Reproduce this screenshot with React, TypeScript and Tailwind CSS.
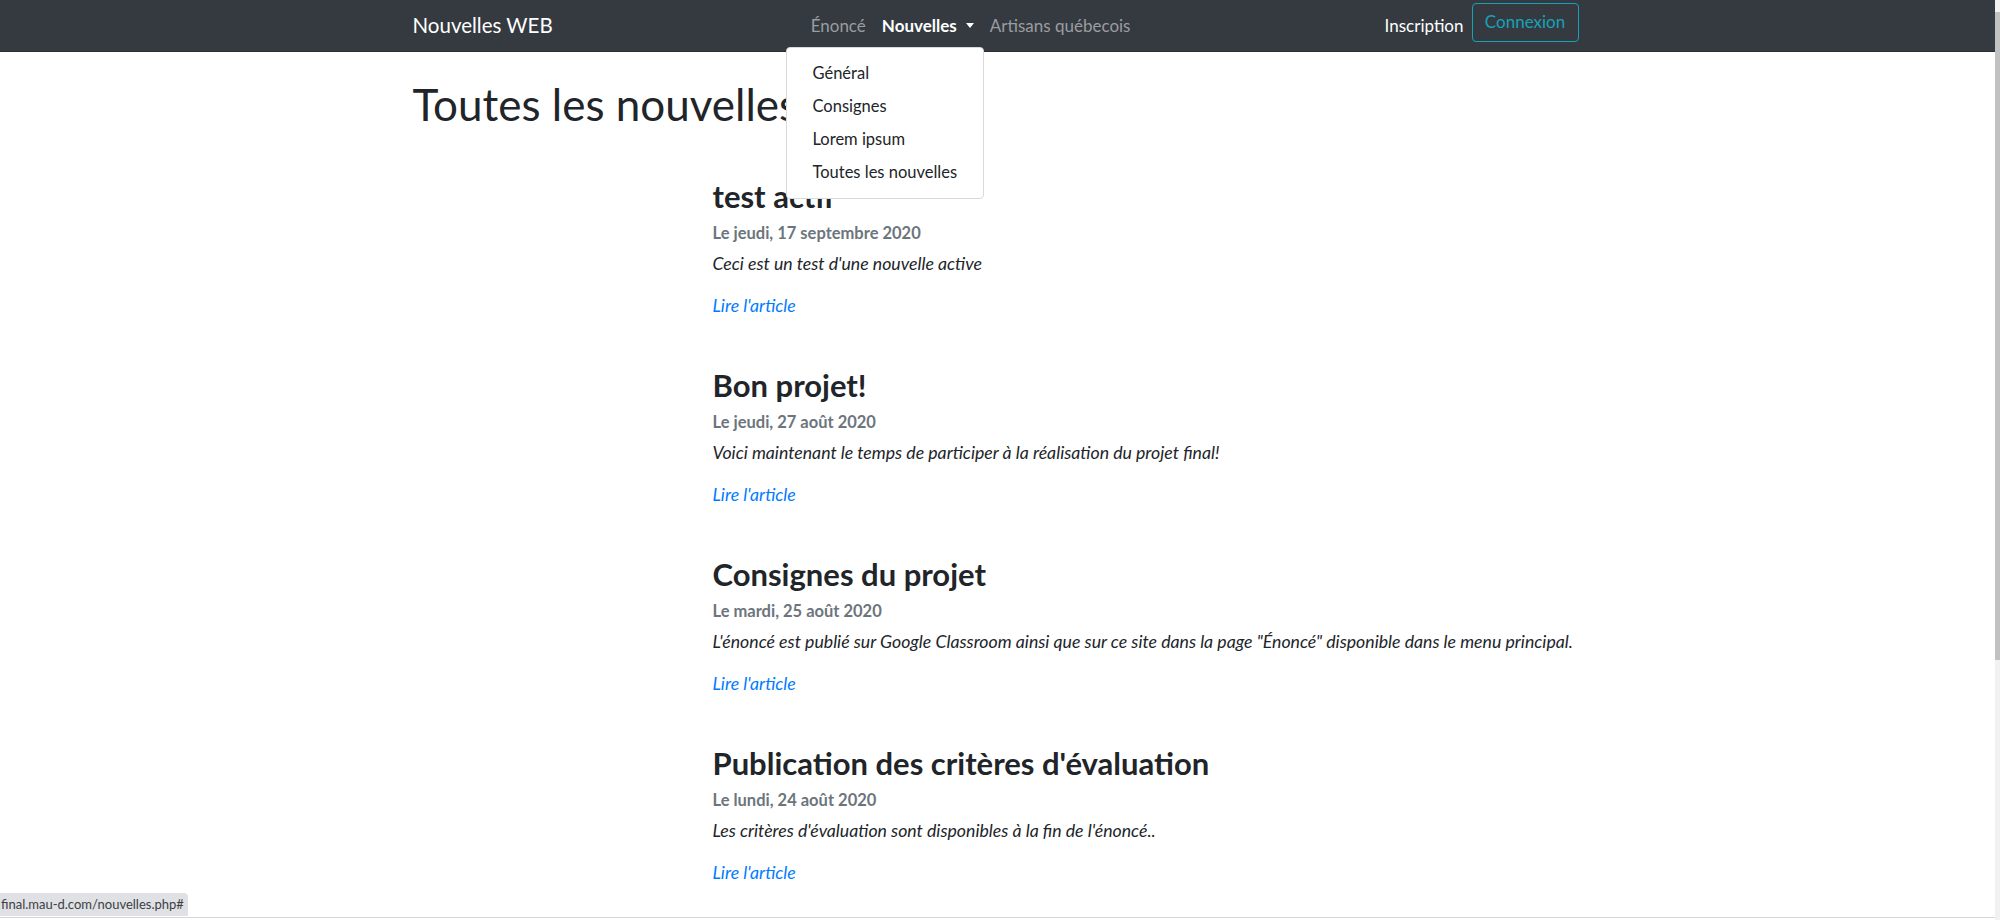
import React from "react";

const articles = [
  {
    id: 1,
    title: "test actif",
    date: "Le jeudi, 17 septembre 2020",
    description: "Ceci est un test d'une nouvelle active",
  },
  {
    id: 2,
    title: "Bon projet!",
    date: "Le jeudi, 27 août 2020",
    description:
      "Voici maintenant le temps de participer à la réalisation du projet final!",
  },
  {
    id: 3,
    title: "Consignes du projet",
    date: "Le mardi, 25 août 2020",
    description:
      'L\'énoncé est publié sur Google Classroom ainsi que sur ce site dans la page "Énoncé" disponible dans le menu principal.',
  },
  {
    id: 4,
    title: "Publication des critères d'évaluation",
    date: "Le lundi, 24 août 2020",
    description: "Les critères d'évaluation sont disponibles à la fin de l'énoncé..",
  },
];

const menuItems = ["Général", "Consignes", "Lorem ipsum", "Toutes les nouvelles"];

function Navbar() {
  return (
    <nav className="flex-none h-[52px] bg-[#343a40] border-b border-[#2b2f33]">
      <div className="relative mx-auto w-[1170px] h-full flex items-center">
        <a className="text-[20.5px] text-white leading-none">Nouvelles WEB</a>
        <ul className="flex items-center ml-[250px] text-[17px]">
          <li className="px-[8px] text-[#9a9da1]">Énoncé</li>
          <li className="px-[8px] text-white font-bold flex items-center">
            Nouvelles
            <span className="ml-[9px] w-0 h-0 border-x-[4px] border-x-transparent border-t-[5px] border-t-white" />
          </li>
          <li className="px-[8px] text-[#9a9da1]">Artisans québecois</li>
        </ul>
        <div className="ml-auto mr-[4px] flex items-center text-[17px]">
          <span className="text-white mr-[8px]">Inscription</span>
          <button className="h-[39px] w-[107px] mb-[7px] border border-[#17a2b8] rounded-[4px] text-[#17a2b8]">
            Connexion
          </button>
        </div>
        {/* dropdown ouvert */}
        <div className="absolute left-[373px] top-[47px] w-[198px] bg-white border border-[#d9dadb] rounded-[4px] py-[9px] z-10">
          {menuItems.map((item) => (
            <div
              key={item}
              className="h-[33px] pl-[26px] flex items-center whitespace-nowrap text-[16.5px] text-[#212529]"
            >
              {item}
            </div>
          ))}
        </div>
      </div>
    </nav>
  );
}

export default function App() {
  return (
    <div
      className="flex h-[920px] overflow-hidden bg-white"
      style={{ fontFamily: "Lato, 'Open Sans', sans-serif" }}
    >
      <div className="flex-1 flex flex-col relative min-h-0">
        <Navbar />
        <main className="mx-auto w-[1170px] flex-1 min-h-0">
          <h1 className="mt-[26px] text-[44px] leading-[1.2] text-[#212529]">
            Toutes les nouvelles
          </h1>
          <section className="ml-[300px] mt-[47px] flex flex-col">
            {articles.map((a) => (
              <article key={a.id} className="mb-[47px]">
                <h3 className="text-[31px] leading-[1.2] font-bold text-[#212529] mb-[6px]">
                  {a.title}
                </h3>
                <h6 className="text-[16.5px] leading-[1.5] font-bold text-[#6c757d] mb-[5px]">
                  {a.date}
                </h6>
                <p className="text-[17.7px] leading-[1.5] italic text-[#212529] mb-[16px]">
                  {a.description}
                </p>
                <a className="text-[17.7px] leading-[1.5] italic text-[#007bff]">
                  Lire l'article
                </a>
              </article>
            ))}
          </section>
        </main>
        <div className="absolute left-0 bottom-[4px] h-[23px] bg-[#dfe1e5] rounded-tr-[4px] flex items-center pl-[1px] pr-[4px] whitespace-nowrap text-[13px] text-[#3c4043]">
          final.mau-d.com/nouvelles.php#
        </div>
        <div className="flex-none h-[3px] border-t border-[#d6d6d6] bg-white" />
      </div>
      <div className="w-[5px] bg-[#f1f1f1] pt-[12px]">
        <div className="h-[648px] bg-[#c1c1c1]" />
      </div>
    </div>
  );
}
